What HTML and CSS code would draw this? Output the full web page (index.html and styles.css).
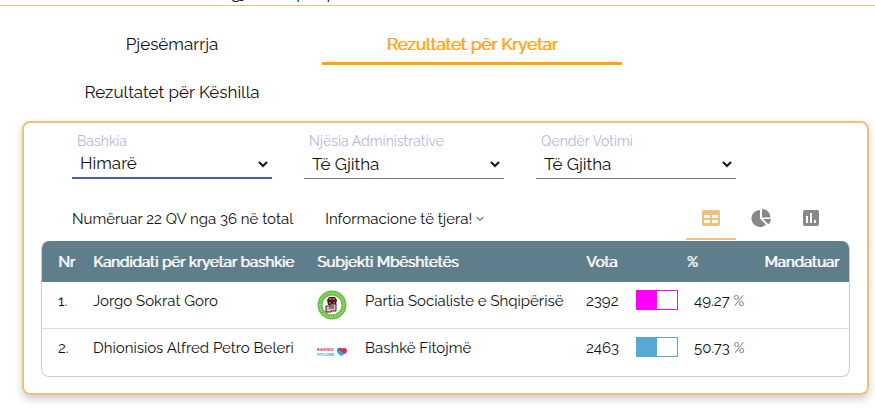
FILE: index.html
```html
<!DOCTYPE html>
<html lang="sq">
<head>
<meta charset="utf-8">
<title>Rezultatet për Kryetar</title>
<link rel="stylesheet" href="styles.css">
</head>
<body>
<header class="page-title"><span>Të zgjedhur për pushtet</span></header>
<nav class="tabs">
  <a class="tab" href="#pjesemarrja">Pjesëmarrja</a>
  <a class="tab tab-active" href="#kryetar">Rezultatet për Kryetar</a>
  <a class="tab" href="#keshilla">Rezultatet për Këshilla</a>
</nav>
<main class="card">
  <form class="filters">
    <div class="field">
      <label for="bashkia">Bashkia</label>
      <div class="select-box select-focus">
        <select id="bashkia"><option>Himarë</option></select>
        <svg class="caret" viewBox="0 0 10 7"><path d="M1 1l4 4 4-4"/></svg>
      </div>
    </div>
    <div class="field">
      <label for="njesia">Njësia Administrative</label>
      <div class="select-box">
        <select id="njesia"><option>Të Gjitha</option></select>
        <svg class="caret" viewBox="0 0 10 7"><path d="M1 1l4 4 4-4"/></svg>
      </div>
    </div>
    <div class="field">
      <label for="qendra">Qendër Votimi</label>
      <div class="select-box">
        <select id="qendra"><option>Të Gjitha</option></select>
        <svg class="caret" viewBox="0 0 10 7"><path d="M1 1l4 4 4-4"/></svg>
      </div>
    </div>
  </form>
  <div class="toolbar">
    <span>Numëruar 22 QV nga 36 në total</span>
    <button class="more" type="button">Informacione të tjera!
      <svg class="more-caret" viewBox="0 0 10 7"><path d="M1 1l4 4 4-4"/></svg>
    </button>
    <div class="views">
      <button class="view view-active" type="button" aria-label="Tabela">
        <svg width="20" height="18" viewBox="0 0 20 18"><path fill="currentColor" fill-rule="evenodd" d="M3 1h14a2 2 0 0 1 2 2v12a2 2 0 0 1-2 2H3a2 2 0 0 1-2-2V3a2 2 0 0 1 2-2zM3 6v3h6V6zm8 0v3h6V6zM3 11v3h6v-3zm8 0v3h6v-3z"/></svg>
      </button>
      <button class="view" type="button" aria-label="Grafik rrethor">
        <svg width="20" height="18" viewBox="0 0 20 18"><path fill="currentColor" d="M9 1v8.500l6 6A8.500 8.500 0 1 1 9 1zM11 0a8.500 8.500 0 0 1 8.500 8.500H11zM12 10h8a8.500 8.500 0 0 1-2.500 5.500z"/></svg>
      </button>
      <button class="view" type="button" aria-label="Grafik me shtylla">
        <svg width="20" height="18" viewBox="0 0 20 18"><path fill="currentColor" fill-rule="evenodd" d="M4 1h12a2 2 0 0 1 2 2v12a2 2 0 0 1-2 2H4a2 2 0 0 1-2-2V3a2 2 0 0 1 2-2zM5 7v7h2V7zm4-3v10h2V4zm4 7v3h2v-3z"/></svg>
      </button>
    </div>
  </div>
  <div class="table-box">
    <table>
      <colgroup><col class="c-nr"><col class="c-name"><col class="c-logo"><col class="c-party"><col class="c-votes"><col class="c-bar"><col class="c-pct"><col></colgroup>
      <thead>
        <tr><th>Nr</th><th>Kandidati për kryetar bashkie</th><th colspan="2">Subjekti Mbështetës</th><th>Vota</th><th class="pct-head" colspan="2">%</th><th class="mandate">Mandatuar</th></tr>
      </thead>
      <tbody>
        <tr>
          <td>1.</td><td>Jorgo Sokrat Goro</td>
          <td><svg class="logo" viewBox="0 0 30 30"><circle cx="15" cy="15" r="12" fill="#fff" stroke="#6abd45" stroke-width="5"/><circle cx="15" cy="15" r="12" fill="none" stroke="#b4e09a" stroke-width="2" stroke-dasharray="1 1.500"/><path fill="#3a2426" d="M12 7h6l2 3-1 5h-8l-1-5z"/><path fill="#d9304c" d="M12 8h3v2h-3zm4 0h2v2h-2zm-4 4h2v2h-2zm4 0h2v2h-2z"/><path fill="#e9b9b8" stroke="#33262b" stroke-width="1" d="M9 16h4v-2h6v7h-5v1H9z"/><path stroke="#33262b" d="M12 18h5M13 16h4"/></svg></td>
          <td>Partia Socialiste e Shqipërisë</td><td>2392</td>
          <td><div class="bar bar-pink"><div class="fill" style="width:49.27%"></div></div></td>
          <td>49.27 <span class="unit">%</span></td><td></td>
        </tr>
        <tr>
          <td>2.</td><td>Dhionisios Alfred Petro Beleri</td>
          <td><svg class="logo" viewBox="0 0 30 30"><text class="logo-text" x="0" y="14" fill="#e63358">BASHKË</text><text class="logo-text" x="0" y="19" fill="#35aee2">FITOJMË</text><path fill="#2aa7df" d="M20 12c2-2 5 0 9 0 1 3-2 5-4 7-3-1-6-4-5-7z"/><path fill="#e32850" d="M21 12c2-2 3-1 4 0 2-2 4-1 5 1 0 2-1 3-2 4z"/></svg></td>
          <td>Bashkë Fitojmë</td><td>2463</td>
          <td><div class="bar bar-blue"><div class="fill" style="width:50.73%"></div></div></td>
          <td>50.73 <span class="unit">%</span></td><td></td>
        </tr>
      </tbody>
    </table>
  </div>
</main>
</body>
</html>
```
FILE: styles.css
```css
* { box-sizing: border-box; }
body {
  margin: 0;
  background: #fff;
  color: #111;
  font-family: Raleway, Lato, "Open Sans", sans-serif;
  font-size: 15px;
  font-variant-numeric: oldstyle-nums;
}
button, select { font: inherit; color: inherit; border: 0; background: none; padding: 0; }
.page-title {
  display: flex;
  align-items: flex-end;
  height: 6px;
  overflow: hidden;
  padding-left: 200px;
  border-bottom: 1px solid #eec07b;
  font-size: 17px;
  line-height: 26px;
}
.tabs { display: flex; flex-wrap: wrap; padding: 11px 22px 8px; }
.tab {
  width: 300px;
  height: 48px;
  padding-top: 3px;
  border-bottom: 3px solid transparent;
  color: inherit;
  font-size: 17px;
  line-height: 48px;
  text-align: center;
  text-decoration: none;
}
.tab-active { border-color: orange; color: #ffa31a; text-shadow: 1px 0 currentColor; }
.card {
  margin: 0 6px 16px 22px;
  padding: 8px 17px 16px;
  border: 2px solid #eec07b;
  border-radius: 8px;
  box-shadow: 0 4px 8px rgba(0, 0, 0, 0.2);
}
.filters { display: flex; gap: 32px; padding: 0 31px; }
.field { width: 200px; }
.field label { display: block; padding-left: 5px; color: #b8b5d8; font-size: 14px; line-height: 20px; }
.select-box {
  display: flex;
  align-items: center;
  position: relative;
  height: 28px;
  border-bottom: 1px solid #757575;
}
.select-focus { border-bottom: 2px solid #4a5fac; }
.select-box select {
  width: 100%;
  height: 26px;
  padding: 0 24px 2px 8px;
  appearance: none;
  font-size: 17px;
  line-height: 22px;
  outline: 0;
}
.caret { position: absolute; right: 4px; width: 10px; height: 7px; pointer-events: none; }
.caret path { fill: none; stroke: #111; stroke-width: 2; }
.toolbar { display: flex; align-items: center; gap: 32px; height: 62px; padding: 18px 14px 1px 31px; }
.more { display: flex; align-items: center; gap: 4px; }
.more-caret { width: 8px; height: 6px; }
.more-caret path { fill: none; stroke: #888; stroke-width: 2; }
.views { display: flex; align-self: stretch; margin-left: auto; }
.view {
  display: flex;
  align-items: center;
  justify-content: center;
  width: 50px;
  color: #888;
  border-bottom: 2px solid transparent;
}
.view-active { color: #eec07b; border-color: #eec07b; }
.table-box { border: 1px solid #ccc; border-top: 0; border-radius: 8px; overflow: hidden; }
table { width: 100%; border-collapse: separate; border-spacing: 0; table-layout: fixed; }
.c-nr { width: 43px; }
.c-name { width: 224px; }
.c-logo { width: 48px; }
.c-party { width: 221px; }
.c-votes { width: 50px; }
.c-bar { width: 58px; }
.c-pct { width: 70px; }
th {
  height: 41px;
  padding: 0 0 0 8px;
  background: #607d8b;
  color: #fff;
  font-weight: normal;
  text-align: left;
  text-shadow: 1px 0 currentColor;
  white-space: nowrap;
}
th:first-child, td:first-child { padding-left: 16px; }
.pct-head { text-align: center; padding: 0; }
.mandate { text-align: right; padding-right: 10px; }
td { height: 47px; padding: 8px 0 0 8px; vertical-align: top; line-height: 22px; white-space: nowrap; }
tbody tr:first-child td { border-bottom: 1px solid #ddd; }
.logo { display: block; width: 30px; height: 30px; }
.logo-text { font: bold 4px "Liberation Sans", sans-serif; }
.bar { width: 42px; height: 20px; border: 1px solid; }
.fill { height: 100%; background: currentColor; }
.bar-pink { color: #f0f; }
.bar-blue { color: #58a8d4; }
.unit { color: #666; }
```
